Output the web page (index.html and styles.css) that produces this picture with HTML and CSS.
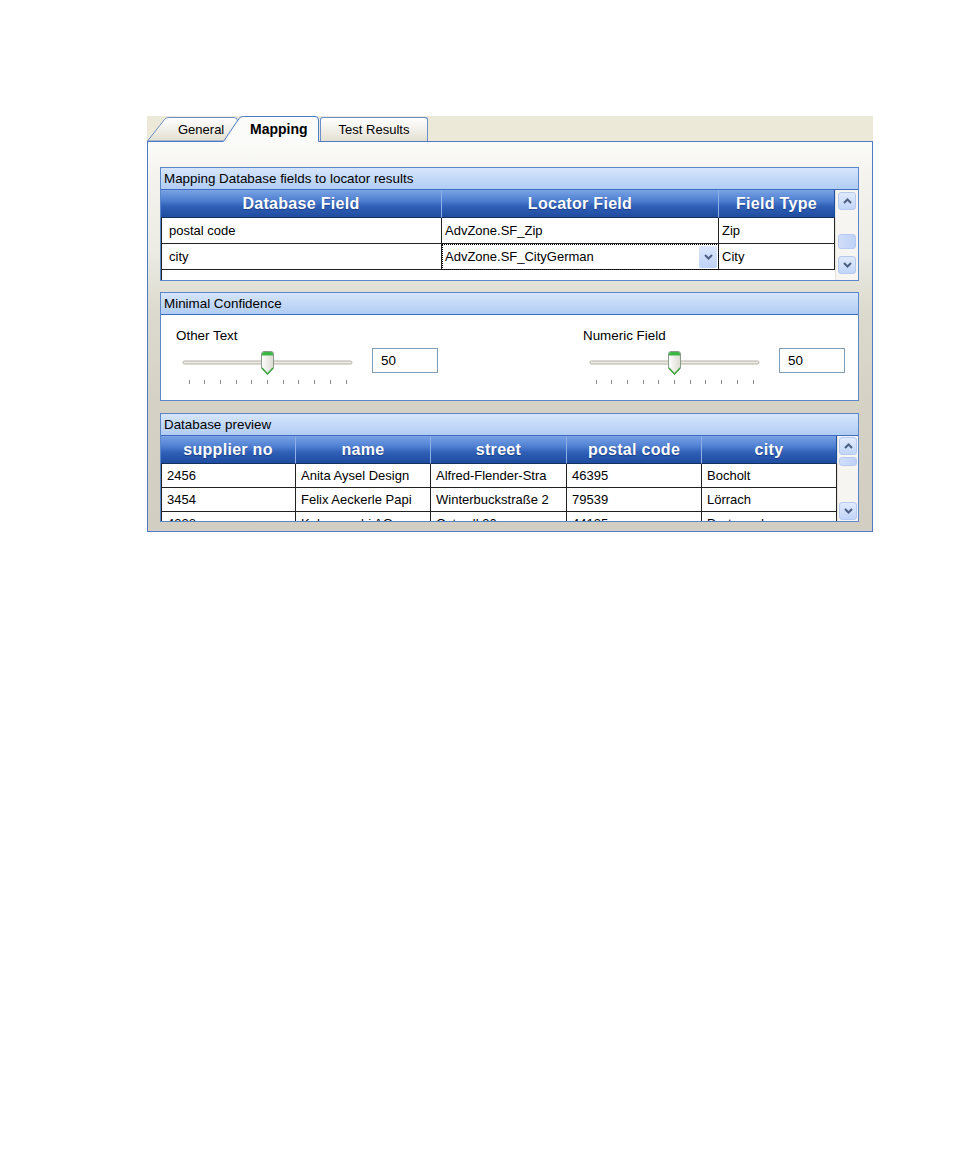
FILE: index.html
```html
<!DOCTYPE html>
<html>
<head>
<meta charset="utf-8">
<title>Mapping</title>
<link rel="stylesheet" href="styles.css">
</head>
<body>
<div class="window">
  <div class="tabstrip">
    <div class="tab tab-general">
      <svg class="tab-shape" width="91" height="24" viewBox="0 0 91 24">
        <defs>
          <linearGradient id="tg1" x1="0" y1="0" x2="0" y2="1">
            <stop offset="0" stop-color="#FFFFFF"/>
            <stop offset="1" stop-color="#E2DFD2"/>
          </linearGradient>
        </defs>
        <path d="M0.5,24 L17.5,2.5 Q19,0.5 22,0.5 L87,0.5 Q90.5,0.5 90.5,4 L90.5,24 Z" fill="url(#tg1)" stroke="#6A8ECA" stroke-width="1"/>
      </svg>
      <span class="tab-label">General</span>
    </div>
    <div class="tab tab-mapping">
      <svg class="tab-shape" width="96" height="26" viewBox="0 0 96 26">
        <path d="M0,26 L16,2.5 Q17.5,0.5 20.5,0.5 L92,0.5 Q95.5,0.5 95.5,4 L95.5,26 Z" fill="#FBFBF9"/>
        <path d="M0.5,25.5 L16,2.5 Q17.5,0.5 20.5,0.5 L92,0.5 Q95.5,0.5 95.5,4 L95.5,25.5" fill="none" stroke="#4D7AC4" stroke-width="1"/>
      </svg>
      <span class="tab-label">Mapping</span>
    </div>
    <div class="tab tab-test">
      <span class="tab-label">Test Results</span>
    </div>
  </div>

  <div class="panel">
    <section class="group">
      <div class="group-head">Mapping Database fields to locator results</div>
      <div class="grid-area grid-area-map">
        <div class="grid-main map">
          <div class="grid-head">
            <div class="gh">Database Field</div>
            <div class="gh">Locator Field</div>
            <div class="gh">Field Type</div>
          </div>
          <div class="grid-body">
            <div class="grid-row">
              <div class="gc c1">postal code</div>
              <div class="gc">AdvZone.SF_Zip</div>
              <div class="gc">Zip</div>
            </div>
            <div class="grid-row">
              <div class="gc c1">city</div>
              <div class="gc editing">
                <span>AdvZone.SF_CityGerman</span>
                <span class="dd-btn">
                  <svg width="9" height="6" viewBox="0 0 9 6"><path d="M1,1 L4.5,4.5 L8,1" fill="none" stroke="#4D6185" stroke-width="2"/></svg>
                </span>
              </div>
              <div class="gc">City</div>
            </div>
          </div>
        </div>
        <div class="vscroll vscroll-map">
          <div class="sb-btn"><svg width="9" height="6" viewBox="0 0 9 6"><path d="M1,5 L4.5,1.5 L8,5" fill="none" stroke="#4D6185" stroke-width="2"/></svg></div>
          <div class="sb-thumb"></div>
          <div class="sb-fill"></div>
          <div class="sb-btn"><svg width="9" height="6" viewBox="0 0 9 6"><path d="M1,1 L4.5,4.5 L8,1" fill="none" stroke="#4D6185" stroke-width="2"/></svg></div>
        </div>
      </div>
    </section>

    <section class="group group-conf">
      <div class="group-head">Minimal Confidence</div>
      <div class="conf-body">
        <div class="conf-item">
          <div class="conf-label">Other Text</div>
          <div class="conf-row">
            <svg class="slider" width="186" height="40" viewBox="0 0 186 40">
              <defs>
                <linearGradient id="thumbA" x1="0" y1="0" x2="1" y2="0">
                  <stop offset="0" stop-color="#FFFFFF"/>
                  <stop offset="1" stop-color="#DCDAD2"/>
                </linearGradient>
              </defs>
              <rect x="7" y="13" width="169" height="3" rx="1.5" fill="#EDEBE4" stroke="#B2AFA4" stroke-width="1"/>
              <path d="M85.5,6 Q85.5,3.5 88,3.5 L95,3.5 Q97.5,3.5 97.5,6 L97.5,20 L91.5,26.5 L85.5,20 Z" fill="url(#thumbA)" stroke="#8C9A8C" stroke-width="1"/>
              <path d="M86,7.5 L86,6 Q86,4 88,4 L95,4 Q97,4 97,6 L97,7.5 Z" fill="#3DB545"/>
              <path d="M86,20 L91.5,26 L97,20" fill="none" stroke="#3DA83F" stroke-width="1.5"/>
              <path d="M13.5,32 v4 M28.5,32 v4 M44.5,32 v4 M60.5,32 v4 M75.5,32 v4 M91.5,32 v4 M107.5,32 v4 M122.5,32 v4 M138.5,32 v4 M154.5,32 v4 M170.5,32 v4" stroke="#8E8C85" stroke-width="1"/>
            </svg>
            <div class="numbox">50</div>
          </div>
        </div>
        <div class="conf-item">
          <div class="conf-label">Numeric Field</div>
          <div class="conf-row">
            <svg class="slider" width="186" height="40" viewBox="0 0 186 40">
              <defs>
                <linearGradient id="thumbB" x1="0" y1="0" x2="1" y2="0">
                  <stop offset="0" stop-color="#FFFFFF"/>
                  <stop offset="1" stop-color="#DCDAD2"/>
                </linearGradient>
              </defs>
              <rect x="7" y="13" width="169" height="3" rx="1.5" fill="#EDEBE4" stroke="#B2AFA4" stroke-width="1"/>
              <path d="M85.5,6 Q85.5,3.5 88,3.5 L95,3.5 Q97.5,3.5 97.5,6 L97.5,20 L91.5,26.5 L85.5,20 Z" fill="url(#thumbB)" stroke="#8C9A8C" stroke-width="1"/>
              <path d="M86,7.5 L86,6 Q86,4 88,4 L95,4 Q97,4 97,6 L97,7.5 Z" fill="#3DB545"/>
              <path d="M86,20 L91.5,26 L97,20" fill="none" stroke="#3DA83F" stroke-width="1.5"/>
              <path d="M13.5,32 v4 M28.5,32 v4 M44.5,32 v4 M60.5,32 v4 M75.5,32 v4 M91.5,32 v4 M107.5,32 v4 M122.5,32 v4 M138.5,32 v4 M154.5,32 v4 M170.5,32 v4" stroke="#8E8C85" stroke-width="1"/>
            </svg>
            <div class="numbox">50</div>
          </div>
        </div>
      </div>
    </section>

    <section class="group group-preview">
      <div class="group-head">Database preview</div>
      <div class="grid-area grid-area-preview">
        <div class="grid-main preview">
          <div class="grid-head">
            <div class="gh">supplier no</div>
            <div class="gh">name</div>
            <div class="gh">street</div>
            <div class="gh">postal code</div>
            <div class="gh">city</div>
          </div>
          <div class="grid-body">
            <div class="grid-row">
              <div class="gc">2456</div>
              <div class="gc">Anita Aysel Design</div>
              <div class="gc">Alfred-Flender-Stra</div>
              <div class="gc">46395</div>
              <div class="gc">Bocholt</div>
            </div>
            <div class="grid-row">
              <div class="gc">3454</div>
              <div class="gc">Felix Aeckerle Papi</div>
              <div class="gc">Winterbuckstraße 2</div>
              <div class="gc">79539</div>
              <div class="gc">Lörrach</div>
            </div>
            <div class="grid-row">
              <div class="gc">4328</div>
              <div class="gc">Kabawoschi AG</div>
              <div class="gc">Ostwall 30</div>
              <div class="gc">44135</div>
              <div class="gc">Dortmund</div>
            </div>
          </div>
        </div>
        <div class="vscroll vscroll-preview">
          <div class="sb-btn"><svg width="9" height="6" viewBox="0 0 9 6"><path d="M1,5 L4.5,1.5 L8,5" fill="none" stroke="#4D6185" stroke-width="2"/></svg></div>
          <div class="sb-thumb"></div>
          <div class="sb-fill"></div>
          <div class="sb-btn"><svg width="9" height="6" viewBox="0 0 9 6"><path d="M1,1 L4.5,4.5 L8,1" fill="none" stroke="#4D6185" stroke-width="2"/></svg></div>
        </div>
      </div>
    </section>
  </div>
</div>
</body>
</html>
```

FILE: styles.css
```css
* {
  box-sizing: border-box;
}

html,
body {
  margin: 0;
  padding: 0;
  background: #ffffff;
}

body {
  font-family: "Liberation Sans", Arial, sans-serif;
  font-size: 13px;
  color: #000000;
}

.window {
  margin: 116px 0 0 147px;
  width: 726px;
}

/* ---------- tabs ---------- */
.tabstrip {
  display: flex;
  align-items: flex-end;
  height: 25px;
  background: #ECE9D8;
}

.tab {
  position: relative;
  flex: none;
  display: flex;
  align-items: center;
}

.tab-shape {
  position: absolute;
  left: 0;
  top: 0;
}

.tab-label {
  position: relative;
  font-size: 13px;
  line-height: 16px;
  white-space: nowrap;
}

.tab-general {
  width: 91px;
  height: 24px;
  padding-left: 31px;
  padding-top: 1px;
}

.tab-mapping {
  width: 96px;
  height: 26px;
  margin-left: -15px;
  margin-bottom: -1px;
  z-index: 2;
  padding-left: 27px;
}

.tab-mapping .tab-label {
  font-weight: bold;
  font-size: 14px;
}

.tab-test {
  width: 108px;
  height: 24px;
  margin-left: 1px;
  justify-content: center;
  padding-top: 1px;
  border: 1px solid #6A8ECA;
  border-bottom: none;
  border-radius: 3px 3px 0 0;
  background: linear-gradient(#FFFFFF, #E3E0D3);
}

/* ---------- panel ---------- */
.panel {
  border: 1px solid #4D7AC4;
  background: linear-gradient(to bottom, #FBFBF9 0px, #F3F2EC 40px, #ECEBE4 110px, #DCDACE 170px, #D5D2C5 260px, #D2CFC2 100%);
  padding: 25px 13px 9px 12px;
}

.group {
  border: 1px solid #5A86CC;
  background: #ffffff;
}

.group-conf {
  margin-top: 11px;
}

.group-preview {
  margin-top: 12px;
}

.group-head {
  height: 22px;
  border-bottom: 1px solid #3D6BBF;
  background: linear-gradient(#D6E5FB, #B1CDF4);
  padding-left: 3px;
  font-size: 13.4px;
  line-height: 21px;
  white-space: nowrap;
}

/* ---------- grids ---------- */
.grid-area {
  display: flex;
  background: #ffffff;
}

.grid-area-map {
  height: 90px;
}

.grid-area-preview {
  height: 85px;
}

.grid-main {
  display: flex;
  flex-direction: column;
  flex: none;
}

.grid-main.map {
  width: 674px;
}

.grid-main.preview {
  width: 676px;
}

.grid-head {
  display: grid;
  height: 28px;
  flex: none;
}

.map .grid-head {
  grid-template-columns: 281px 277px 116px;
}

.preview .grid-head {
  grid-template-columns: 135px 135px 136px 135px 135px;
}

.gh {
  background: linear-gradient(to bottom, #7AA3E4 0%, #4F80D2 38%, #2F5FB6 62%, #1E4C9F 100%);
  color: #ffffff;
  font-weight: bold;
  font-size: 16px;
  letter-spacing: 0.3px;
  text-align: center;
  line-height: 27px;
  border-right: 1px solid #8DAEE6;
  border-bottom: 1px solid #14305F;
  text-shadow: 0 1px 1px rgba(0, 20, 80, 0.45);
  white-space: nowrap;
  overflow: hidden;
}

.gh:last-child {
  border-right-color: #1E4C9F;
}

.grid-body {
  flex: 1;
  border-left: 1px solid #222222;
  overflow: hidden;
}

.grid-row {
  display: grid;
}

.map .grid-row {
  grid-template-columns: 280px 277px 116px;
  height: 26px;
}

.preview .grid-row {
  grid-template-columns: 134px 135px 136px 135px 135px;
  height: 24px;
}

.gc {
  border-right: 1px solid #222222;
  border-bottom: 1px solid #222222;
  white-space: nowrap;
  overflow: hidden;
  font-size: 13px;
  padding-left: 3px;
}

.map .gc {
  line-height: 25px;
}

.map .gc.c1 {
  padding-left: 7px;
}

.preview .gc {
  line-height: 23px;
  padding-left: 5px;
}

.gc.editing {
  display: flex;
  align-items: center;
  justify-content: space-between;
  padding-right: 1px;
  outline: 1px dotted #000000;
  outline-offset: -1px;
}

.dd-btn {
  width: 18px;
  height: 22px;
  display: flex;
  align-items: center;
  justify-content: center;
  border-radius: 2px;
  background: linear-gradient(#DCE7FC, #BFD3F7);
}

/* ---------- scrollbars ---------- */
.vscroll {
  display: flex;
  flex-direction: column;
  align-items: center;
  background: #F6F5F1;
  border-left: 1px solid #E6E4DC;
}

.vscroll-map {
  width: 23px;
  padding: 2px 0 6px;
}

.vscroll-preview {
  width: 21px;
  padding: 1px 0 1px;
}

.sb-btn {
  width: 18px;
  height: 18px;
  flex: none;
  display: flex;
  align-items: center;
  justify-content: center;
  border: 1px solid #B6C9F0;
  border-radius: 3px;
  background: linear-gradient(#E0EAFD, #C2D5F8);
}

.sb-thumb {
  width: 18px;
  flex: none;
  border: 1px solid #B6C9F0;
  border-radius: 3px;
  background: linear-gradient(90deg, #D0DEF9, #BED1F6);
}

.vscroll-map .sb-thumb {
  margin-top: 24px;
  height: 15px;
}

.vscroll-preview .sb-thumb {
  margin-top: 2px;
  height: 9px;
}

.sb-fill {
  flex: 1;
}

/* ---------- confidence ---------- */
.conf-body {
  height: 85px;
  display: grid;
  grid-template-columns: 407px 1fr;
  padding: 13px 0 0 15px;
  background: #ffffff;
}

.conf-label {
  font-size: 13.4px;
  line-height: 16px;
  margin-bottom: 4px;
  white-space: nowrap;
}

.conf-row {
  display: flex;
  align-items: flex-start;
  gap: 10px;
}

.slider {
  display: block;
  flex: none;
}

.numbox {
  width: 66px;
  height: 25px;
  border: 1px solid #7F9DB9;
  background: #ffffff;
  padding-left: 8px;
  font-size: 13.4px;
  line-height: 23px;
}
```
